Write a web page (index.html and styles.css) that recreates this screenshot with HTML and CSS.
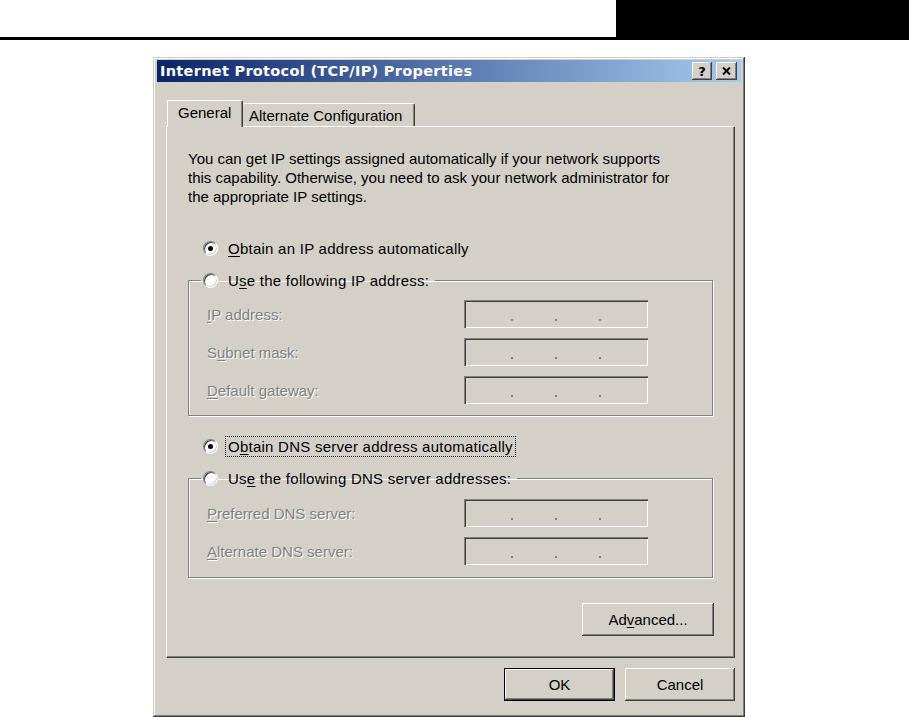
FILE: index.html
```html
<!DOCTYPE html>
<html lang="en">
<head>
  <meta charset="UTF-8" />
  <title>Internet Protocol (TCP/IP) Properties</title>
  <link rel="stylesheet" href="styles.css">
</head>
<body>
  <div class="page-head">
    <div class="head-rule"></div>
    <div class="head-block"></div>
  </div>

  <div class="dialog">
    <div class="titlebar">
      <span class="title">Internet Protocol (TCP/IP) Properties</span>
      <div class="caption-btns">
        <div class="cap-btn">?</div>
        <div class="cap-btn">
          <svg width="9" height="8" viewBox="0 0 9 8"><path d="M1 0.5 L8 7.5 M8 0.5 L1 7.5" stroke="#000" stroke-width="2" fill="none"/></svg>
        </div>
      </div>
    </div>

    <div class="tabs">
      <div class="tab tab-active">General</div>
      <div class="tab">Alternate Configuration</div>
    </div>

    <div class="tab-panel">
      <p class="intro">You can get IP settings assigned automatically if your network supports<br>this capability. Otherwise, you need to ask your network administrator for<br>the appropriate IP settings.</p>

      <div class="radio-row">
        <span class="radio checked"></span>
        <span class="radio-text"><u>O</u>btain an IP address automatically</span>
      </div>

      <fieldset class="group">
        <legend class="radio-row legend">
          <span class="radio"></span>
          <span class="radio-text">U<u>s</u>e the following IP address:</span>
        </legend>
        <div class="field-row">
          <span class="field-label"><u>I</u>P address:</span>
          <div class="ip-box"><i></i><i></i><i></i></div>
        </div>
        <div class="field-row">
          <span class="field-label">S<u>u</u>bnet mask:</span>
          <div class="ip-box"><i></i><i></i><i></i></div>
        </div>
        <div class="field-row">
          <span class="field-label"><u>D</u>efault gateway:</span>
          <div class="ip-box"><i></i><i></i><i></i></div>
        </div>
      </fieldset>

      <div class="radio-row dns-auto">
        <span class="radio checked"></span>
        <span class="radio-text focused">O<u>b</u>tain DNS server address automatically</span>
      </div>

      <fieldset class="group group-dns">
        <legend class="radio-row legend">
          <span class="radio"></span>
          <span class="radio-text">Us<u>e</u> the following DNS server addresses:</span>
        </legend>
        <div class="field-row">
          <span class="field-label"><u>P</u>referred DNS server:</span>
          <div class="ip-box"><i></i><i></i><i></i></div>
        </div>
        <div class="field-row">
          <span class="field-label"><u>A</u>lternate DNS server:</span>
          <div class="ip-box"><i></i><i></i><i></i></div>
        </div>
      </fieldset>

      <div class="advanced-row">
        <div class="btn btn-advanced">Ad<u>v</u>anced...</div>
      </div>
    </div>

    <div class="dialog-buttons">
      <div class="btn btn-default">OK</div>
      <div class="btn">Cancel</div>
    </div>
  </div>
</body>
</html>
```

FILE: styles.css
```css
* {
  margin: 0;
  padding: 0;
  box-sizing: border-box;
}

body {
  background: #fff;
  font-family: "Liberation Sans", Arial, sans-serif;
  font-size: 15px;
  color: #000;
}

u {
  text-decoration: underline;
  text-underline-offset: 2px;
}

/* page header */
.page-head {
  display: flex;
  height: 40px;
}

.head-rule {
  width: 616px;
  border-bottom: 3px solid #000;
}

.head-block {
  flex: 1;
  background: #000;
}

/* dialog window */
.dialog {
  margin: 17px 0 0 153px;
  width: 592px;
  height: 660px;
  padding: 3px 4px 0 4px;
  background: #d4d0c8;
  box-shadow:
    inset -1px -1px 0 #404040,
    inset 1px 1px 0 #d4d0c8,
    inset -2px -2px 0 #808080,
    inset 2px 2px 0 #fff;
}

.titlebar {
  height: 22px;
  display: flex;
  align-items: center;
  justify-content: space-between;
  padding: 0 4px 0 3px;
  background: linear-gradient(to right, #0a246a, #a6caf0);
}

.title {
  color: #fff;
  font-family: "DejaVu Sans", sans-serif;
  font-weight: bold;
  font-size: 14.5px;
  letter-spacing: 0.3px;
}

.caption-btns {
  display: flex;
  gap: 4px;
}

.cap-btn {
  width: 20px;
  height: 18px;
  display: flex;
  align-items: center;
  justify-content: center;
  background: #d4d0c8;
  font-family: "DejaVu Sans", sans-serif;
  font-weight: bold;
  font-size: 13px;
  box-shadow:
    inset -1px -1px 0 #404040,
    inset 1px 1px 0 #fff,
    inset -2px -2px 0 #808080;
}

.cap-btn + .cap-btn {
  width: 21px;
}

/* tabs */
.tabs {
  display: flex;
  align-items: flex-end;
  margin: 18px 0 0 10px;
}

.tab {
  height: 23px;
  padding: 0 6px;
  display: flex;
  align-items: center;
  background: #d4d0c8;
  border-top: 1px solid #fff;
  border-left: 1px solid #fff;
  border-right: 1px solid #404040;
  box-shadow: inset -1px 0 0 #808080;
  border-radius: 2px 2px 0 0;
}

.tab-active {
  height: 27px;
  width: 76px;
  padding: 0 0 4px 10px;
  margin-bottom: -1px;
}

.tab + .tab {
  width: 172px;
  padding-top: 1px;
  border-left: none;
}

/* tab panel */
.tab-panel {
  margin: 0 6px 0 9px;
  height: 532px;
  padding: 0 0 0 21px;
  border-top: 1px solid #fff;
  border-left: 1px solid #fff;
  border-right: 1px solid #404040;
  border-bottom: 1px solid #404040;
  box-shadow: inset -1px -1px 0 #808080;
}

.intro {
  margin-top: 22px;
  line-height: 19px;
  white-space: nowrap;
}

.radio-row {
  display: flex;
  align-items: center;
  height: 20px;
  margin-top: 32px;
  padding-left: 15px;
}

.radio {
  width: 15px;
  height: 15px;
  border-radius: 50%;
  background: #fff;
  border: 1px solid;
  border-color: #808080 #fff #fff #808080;
  box-shadow: inset 1px 1px 0 #404040, inset -1px -1px 0 #d4d0c8;
  display: flex;
  align-items: center;
  justify-content: center;
  flex: none;
}

.radio.checked::after {
  content: "";
  width: 5px;
  height: 5px;
  border-radius: 50%;
  background: #000;
}

.radio-text {
  margin-left: 8px;
  padding: 0 2px;
  line-height: 19px;
  letter-spacing: 0.25px;
}

.focused {
  outline: 1px dotted #000;
}

/* group boxes */
.group {
  width: 525px;
  margin-top: 12px;
  padding: 10px 0 11px 0;
  border: 1px solid #808080;
  box-shadow: 1px 1px 0 #fff, inset 1px 1px 0 #fff;
  display: flex;
  flex-direction: column;
  gap: 10px;
}

.legend {
  margin: 0 0 0 12px;
  padding: 0 4px 0 2px;
}

.group-dns {
  padding-top: 11px;
  padding-bottom: 12px;
}

.dns-auto {
  margin-top: 20px;
}

.field-row {
  display: flex;
  align-items: center;
  margin-left: 18px;
}

.field-label {
  width: 257px;
  color: #808080;
  text-shadow: 1px 1px 0 #fff;
}

.ip-box {
  width: 184px;
  height: 28px;
  display: flex;
  align-items: flex-end;
  gap: 42px;
  padding: 0 0 7px 47px;
  background: #d4d0c8;
  box-shadow:
    inset 1px 1px 0 #808080,
    inset 2px 2px 0 #404040,
    inset -1px -1px 0 #fff,
    inset -2px -2px 0 #d4d0c8;
}

.ip-box i {
  width: 2px;
  height: 2px;
  background: #808080;
}

/* buttons */
.advanced-row {
  display: flex;
  justify-content: flex-end;
  margin: 25px 20px 0 0;
}

.btn {
  width: 110px;
  height: 33px;
  display: flex;
  align-items: center;
  justify-content: center;
  background: #d4d0c8;
  box-shadow:
    inset -1px -1px 0 #404040,
    inset 1px 1px 0 #fff,
    inset -2px -2px 0 #808080;
}

.btn-advanced {
  width: 132px;
}

.btn-default {
  width: 111px;
  border: 1px solid #000;
}

.dialog-buttons {
  display: flex;
  justify-content: flex-end;
  gap: 10px;
  margin: 10px 6px 0 0;
}
```
